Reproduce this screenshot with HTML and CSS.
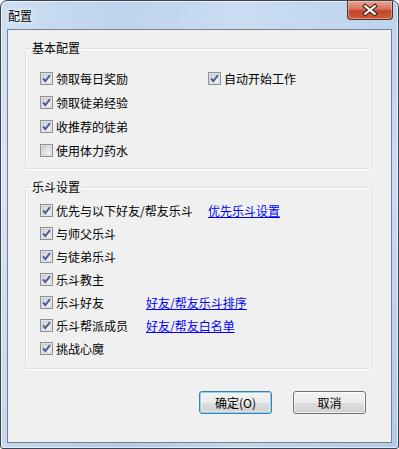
FILE: index.html
```html
<!doctype html>
<html>
<head>
	<title>配置</title>
	<meta name="viewport" content="width=device-width, initial-scale=1">
	<link rel="stylesheet" href="styles.css">
</head>
<body>
	<svg width="0" height="0" class="defs">
		<defs>
			<linearGradient id="boxfill" x1="0" y1="0" x2="1" y2="1">
				<stop offset="0" stop-color="#c9ced4"/>
				<stop offset="1" stop-color="#fafafa"/>
			</linearGradient>
			<symbol id="box" viewBox="0 0 13 13">
				<rect x="0.5" y="0.5" width="12" height="12" fill="#f4f4f4" stroke="#8e8f8f"/>
				<rect x="2" y="2" width="9" height="9" fill="url(#boxfill)" stroke="#b8bcc2" stroke-width="0.6"/>
			</symbol>
			<symbol id="chk" viewBox="0 0 13 13">
				<use href="#box"/>
				<path d="M3.2 6.4 L5.3 9.2 L10 3.2" fill="none" stroke="#4a5d92" stroke-width="1.9" stroke-linejoin="round"/>
			</symbol>
		</defs>
	</svg>

	<div class="window">
		<header class="titlebar">
			<span class="title">配置</span>
			<button class="close" aria-label="关闭">
				<svg width="46" height="19" viewBox="0 0 46 19">
					<path d="M18 5 L28 13 M28 5 L18 13" stroke="#3b1d16" stroke-width="4.4" stroke-linecap="square"/>
					<path d="M18 5 L28 13 M28 5 L18 13" stroke="#ffffff" stroke-width="2.2" stroke-linecap="square"/>
				</svg>
			</button>
		</header>

		<main class="client">
			<fieldset class="group">
				<legend>基本配置</legend>
				<div class="rows basic">
					<label class="check"><svg><use href="#chk"/></svg>领取每日奖励</label>
					<label class="check"><svg><use href="#chk"/></svg>自动开始工作</label>
					<label class="check"><svg><use href="#chk"/></svg>领取徒弟经验</label>
					<span></span>
					<label class="check"><svg><use href="#chk"/></svg>收推荐的徒弟</label>
					<span></span>
					<label class="check"><svg><use href="#box"/></svg>使用体力药水</label>
				</div>
			</fieldset>

			<fieldset class="group fight">
				<legend>乐斗设置</legend>
				<div class="rows fights">
					<label class="check span2"><svg><use href="#chk"/></svg>优先与以下好友/帮友乐斗</label>
					<a href="#" class="link">优先乐斗设置</a>
					<label class="check full"><svg><use href="#chk"/></svg>与师父乐斗</label>
					<label class="check full"><svg><use href="#chk"/></svg>与徒弟乐斗</label>
					<label class="check full"><svg><use href="#chk"/></svg>乐斗教主</label>
					<label class="check"><svg><use href="#chk"/></svg>乐斗好友</label>
					<a href="#" class="link span2">好友/帮友乐斗排序</a>
					<label class="check"><svg><use href="#chk"/></svg>乐斗帮派成员</label>
					<a href="#" class="link span2">好友/帮友白名单</a>
					<label class="check full"><svg><use href="#chk"/></svg>挑战心魔</label>
				</div>
			</fieldset>

			<footer class="buttons">
				<button class="btn default">确定(O)</button>
				<button class="btn">取消</button>
			</footer>
		</main>
	</div>
</body>
</html>
```

FILE: styles.css
```css
* {
	box-sizing: border-box;
}
body {
	margin: 0;
	background: #ffffff;
	font-family: "Noto Sans CJK SC", "Liberation Sans", sans-serif;
	font-size: 12px;
	color: #000;
}
.defs {
	position: absolute;
	width: 0;
	height: 0;
}

.window {
	width: 399px;
	height: 449px;
	display: flex;
	flex-direction: column;
	border: 1px solid #3d4552;
	border-radius: 7px 7px 3px 3px;
	background:
		linear-gradient(90deg, rgba(255,255,255,0.25), rgba(255,255,255,0) 30%, rgba(255,255,255,0.2) 60%, rgba(255,255,255,0)),
		linear-gradient(#bcd3ed, #c9ddf3 40%, #b2cbe8);
	box-shadow: inset 0 0 0 1px rgba(255,255,255,0.6);
}

.titlebar {
	height: 28px;
	display: flex;
	align-items: flex-start;
	padding-left: 7px;
}
.title {
	margin-top: 7px;
	line-height: 16px;
	text-shadow: 0 0 6px #fff, 0 0 3px #fff;
}
.close {
	margin-left: auto;
	margin-right: 5px;
	width: 46px;
	height: 19px;
	padding: 0;
	border: 1px solid #5b2a20;
	border-top: none;
	border-radius: 0 0 4px 4px;
	background: linear-gradient(#e7a595, #d3735e 45%, #c0462d 55%, #cf5a38);
	box-shadow: inset 0 0 0 1px rgba(255,220,210,0.45);
	display: flex;
}

.client {
	flex: 1;
	margin: 0 6px 5px 6px;
	border: 1px solid #78818f;
	background: #f0f0f0;
	padding: 10px 18px 0 17px;
	display: flex;
	flex-direction: column;
}

.group {
	margin: 0;
	padding: 0 0 6px 5px;
	border: 1px solid #d5dfe5;
	border-radius: 3px;
	box-shadow: inset 1px 1px 0 #fff, 1px 1px 0 #fff;
}
.group legend {
	padding: 0 1px;
	line-height: 16px;
}
.group.fight {
	margin-top: 10px;
	padding-bottom: 8px;
}

.rows {
	display: grid;
	padding-left: 9px;
}
.rows.basic {
	margin-top: 10px;
	grid-template-columns: 168px 1fr;
	grid-auto-rows: 24px;
}
.rows.fights {
	margin-top: 4px;
	grid-template-columns: 106px 62px 1fr;
	grid-auto-rows: 23px;
}
.span2 {
	grid-column: span 2;
}
.full {
	grid-column: 1 / -1;
}

.check {
	display: flex;
	align-items: center;
	gap: 3px;
	white-space: nowrap;
}
.check svg {
	width: 13px;
	height: 13px;
	flex: none;
}
.link {
	display: flex;
	align-items: center;
	color: #0000ff;
	text-decoration: underline;
	white-space: nowrap;
}

.buttons {
	display: flex;
	justify-content: flex-end;
	gap: 21px;
	margin-top: 22px;
	padding-right: 7px;
}
.btn {
	width: 73px;
	height: 23px;
	padding: 0;
	font-family: inherit;
	font-size: 12px;
	color: #000;
	border: 1px solid #707070;
	border-radius: 3px;
	background: linear-gradient(#f2f2f2, #ebebeb 50%, #dddddd 51%, #cfcfcf);
	box-shadow: inset 0 0 0 1px rgba(255,255,255,0.7);
}
.btn.default {
	border-color: #3c7fb1;
	box-shadow: inset 0 0 0 1px #8fd0f0, inset 0 0 0 2px rgba(255,255,255,0.4);
}
```
